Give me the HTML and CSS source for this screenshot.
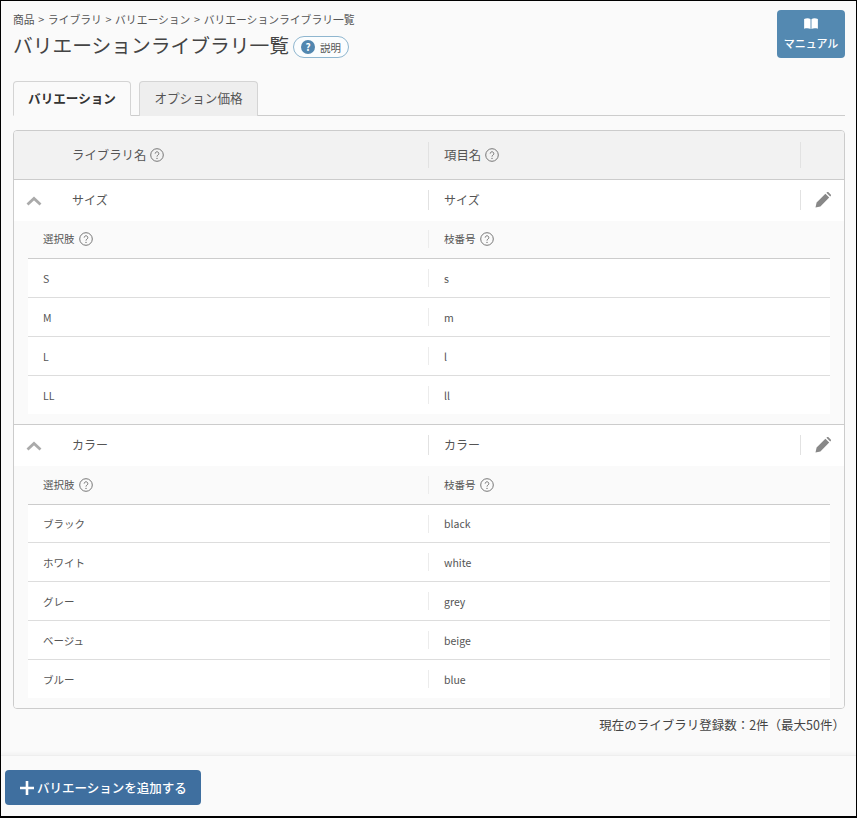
FILE: index.html
```html
<!DOCTYPE html>
<html lang="ja">
<head>
<meta charset="utf-8">
<title>バリエーションライブラリ一覧</title>
<link rel="stylesheet" href="styles.css">
</head>
<body>
<svg class="defs" width="0" height="0" aria-hidden="true">
  <symbol id="help" viewBox="0 0 14 14"><circle cx="7" cy="7" r="6.3" fill="none" stroke="currentColor" stroke-width="1"/><path d="M5.200 5.600a1.800 1.800 0 1 1 2.900 1.400c-.7.500-1.100.8-1.100 1.600" fill="none" stroke="currentColor" stroke-width="1"/><circle cx="7" cy="10.400" r=".7" fill="currentColor"/></symbol>
  <symbol id="chev" viewBox="0 0 16 10"><path d="M1.500 8.500 8 2.500l6.500 6" fill="none" stroke="currentColor" stroke-width="2.800"/></symbol>
  <symbol id="pen" viewBox="0 0 16 16"><path d="M0.500 15.500 1.600 10.600 10.400 1.800 14.200 5.600 5.400 14.400Z M11.400 0.800 12 .3c.5-.4 1.100-.4 1.500 0L15.700 2.500c.4.400.4 1 0 1.500l-.5.600Z" fill="currentColor"/></symbol>
</svg>
<div class="frame">
  <main class="content">
    <header class="page-head">
      <div>
        <nav class="crumbs">商品 &gt; ライブラリ &gt; バリエーション &gt; バリエーションライブラリ一覧</nav>
        <div class="title-row">
          <h1>バリエーションライブラリ一覧</h1>
          <span class="explain"><span class="explain-mark">?</span>説明</span>
        </div>
      </div>
      <a class="manual">
        <svg width="14" height="11" viewBox="0 0 15 12"><path d="M0 1C2.500 0 5.500 0 7 1.300V12C5.500 11 2.500 11 0 11.600Z M8 1.300C9.500 0 12.500 0 15 1V11.600C12.500 11 9.500 11 8 12Z" fill="currentColor"/></svg>
        <span>マニュアル</span>
      </a>
    </header>

    <div class="tabs">
      <span class="tab active">バリエーション</span>
      <span class="tab">オプション価格</span>
    </div>

    <section class="table">
      <div class="row head">
        <div class="cell name">ライブラリ名<svg class="help"><use href="#help"/></svg></div>
        <div class="cell item"><span>項目名</span><svg class="help"><use href="#help"/></svg></div>
        <div class="cell act"></div>
      </div>

      <div class="group">
        <div class="row lib">
          <svg class="chev"><use href="#chev"/></svg>
          <div class="cell name">サイズ</div>
          <div class="cell item">サイズ</div>
          <div class="cell act"><svg class="pen"><use href="#pen"/></svg></div>
        </div>
        <div class="opts">
          <div class="opt opt-head"><div>選択肢<svg class="help"><use href="#help"/></svg></div><div class="branch">枝番号<svg class="help"><use href="#help"/></svg></div></div>
          <div class="opt"><div>S</div><div class="branch">s</div></div>
          <div class="opt"><div>M</div><div class="branch">m</div></div>
          <div class="opt"><div>L</div><div class="branch">l</div></div>
          <div class="opt"><div>LL</div><div class="branch">ll</div></div>
        </div>
      </div>

      <div class="group">
        <div class="row lib">
          <svg class="chev"><use href="#chev"/></svg>
          <div class="cell name">カラー</div>
          <div class="cell item">カラー</div>
          <div class="cell act"><svg class="pen"><use href="#pen"/></svg></div>
        </div>
        <div class="opts">
          <div class="opt opt-head"><div>選択肢<svg class="help"><use href="#help"/></svg></div><div class="branch">枝番号<svg class="help"><use href="#help"/></svg></div></div>
          <div class="opt"><div>ブラック</div><div class="branch">black</div></div>
          <div class="opt"><div>ホワイト</div><div class="branch">white</div></div>
          <div class="opt"><div>グレー</div><div class="branch">grey</div></div>
          <div class="opt"><div>ベージュ</div><div class="branch">beige</div></div>
          <div class="opt"><div>ブルー</div><div class="branch">blue</div></div>
        </div>
      </div>
    </section>

    <p class="count">現在のライブラリ登録数：2件（最大50件）</p>
  </main>

  <footer class="foot">
    <a class="add"><svg width="14" height="14" viewBox="0 0 14 14"><path d="M5.700 0h2.600v5.700H14v2.600H8.300V14H5.700V8.300H0V5.700h5.700Z" fill="currentColor"/></svg>バリエーションを追加する</a>
  </footer>
</div>
</body>
</html>
```
FILE: styles.css
```css
* { box-sizing: border-box; }
html, body { margin: 0; padding: 0; height: 100%; }
body {
  font-family: "Noto Sans CJK JP", "Noto Sans", sans-serif;
  color: #444;
  background: #fafafa;
}
.defs { position: absolute; }
.frame {
  height: 818px;
  display: flex;
  flex-direction: column;
  border: 1px solid #000;
  border-bottom-width: 2px;
  background: #fafafa;
}
.content { flex: 1; padding: 9px 11px 0 12px; }
.page-head { display: flex; justify-content: space-between; height: 71px; }
.crumbs { font-size: 10.800px; line-height: 18px; color: #555; word-spacing: 1.200px; }
.title-row { display: flex; align-items: center; gap: 4px; margin-top: 3px; height: 28px; }
h1 { margin: 0; font-size: 19.750px; font-weight: 400; line-height: 28px; color: #444; }
.explain {
  display: flex; align-items: center; gap: 5px;
  height: 22px; width: 56px; padding: 0 7px;
  border: 1px solid #8fb6cf; border-radius: 11px;
  font-size: 10.500px; color: #555; background: #fbfdfe;
  position: relative; top: 2px;
}
.explain-mark {
  width: 14px; height: 14px; border-radius: 50%; flex: none;
  background: #5287b0; color: #fff;
  font-size: 10px; font-weight: 700; line-height: 14px; text-align: center;
}
.manual {
  width: 68px; height: 48px; border-radius: 4px;
  background: #5489b1; color: #fff;
  display: flex; flex-direction: column; align-items: center; justify-content: flex-start;
  padding-top: 8px;
  font-size: 11px; font-weight: 500; gap: 6px; line-height: 16px;
}
.tabs { display: flex; gap: 8px; height: 35px; border-bottom: 1px solid #ccc; }
.tab {
  width: 119px; height: 35px; text-align: center;
  border: 1px solid #d4d4d4; border-bottom: 0;
  border-radius: 4px 4px 0 0;
  background: #eee; color: #555;
  font-size: 12.600px; line-height: 32px;
}
.tab.active {
  width: 118px;
  background: #fafafa; color: #333; font-weight: 700;
  border-bottom: 1px solid #fafafa;
}
.table {
  margin-top: 14px;
  border: 1px solid #ccc;
  border-radius: 4px;
  overflow: hidden;
  background: #fafafa;
}
.row { display: flex; align-items: center; position: relative; }
.head { height: 49px; background: #f2f2f2; border-bottom: 1px solid #ccc; color: #555; }
.cell { display: flex; align-items: center; font-size: 12px; }
.row .name { width: 414px; padding-left: 58px; }
.row .item { width: 372px; height: 26px; padding-left: 15px; border-left: 1px solid #e2e2e2; }
.row .act { width: 44px; height: 26px; border-left: 1px solid #e2e2e2; justify-content: center; }
.head .cell { font-size: 12.400px; }
.help { width: 14px; height: 14px; margin-left: 4px; color: #777; flex: none; }
.group { border-bottom: 1px solid #ccc; }
.group:last-child { border-bottom: 0; }
.lib { height: 41px; background: #fff; color: #555; padding-bottom: 1px; }
.lib .name, .lib .item { padding-bottom: 2px; }
.lib .item { height: 20px; }
.lib .act { height: 20px; }
.chev { position: absolute; left: 12px; top: 16px; width: 16px; height: 10px; color: #aaa; }
.pen { width: 16px; height: 16px; color: #888; }
.opts { padding: 0 14px 10px; background: #fafafa; }
.opt {
  display: flex; align-items: center;
  height: 39px;
  background: #fff;
  border-bottom: 1px solid #ddd;
  font-size: 10.500px; color: #555;
}
.opt:last-child { border-bottom: 0; height: 38px; }
.opt > div { display: flex; align-items: center; }
.opt > div:first-child { width: 400px; padding-left: 15px; }
.opt-head { height: 38px; background: #fafafa; border-bottom-color: #ccc; padding-bottom: 2px; }
.group:last-child .opt-head { height: 39px; padding-bottom: 1px; }
.group:last-child .opt-head + .opt { height: 38px; }
.branch { border-left: 1px solid #ececec; padding-left: 15px; height: 18px; }
.count { margin: 8px 0 0; text-align: right; font-size: 12.500px; line-height: 16px; color: #444; }
.foot {
  height: 61px;
  padding: 14px 0 0 4px;
  border-top: 1px solid #eee;
  box-shadow: 0 -2px 3px rgba(0,0,0,.03);
  background: #fafafa;
}
.add {
  display: inline-flex; align-items: center; gap: 3px;
  width: 196px; height: 35px; padding-left: 15px;
  background: #3f6f9f; color: #fff;
  border-radius: 4px;
  font-size: 12.500px; font-weight: 500;
}
```
